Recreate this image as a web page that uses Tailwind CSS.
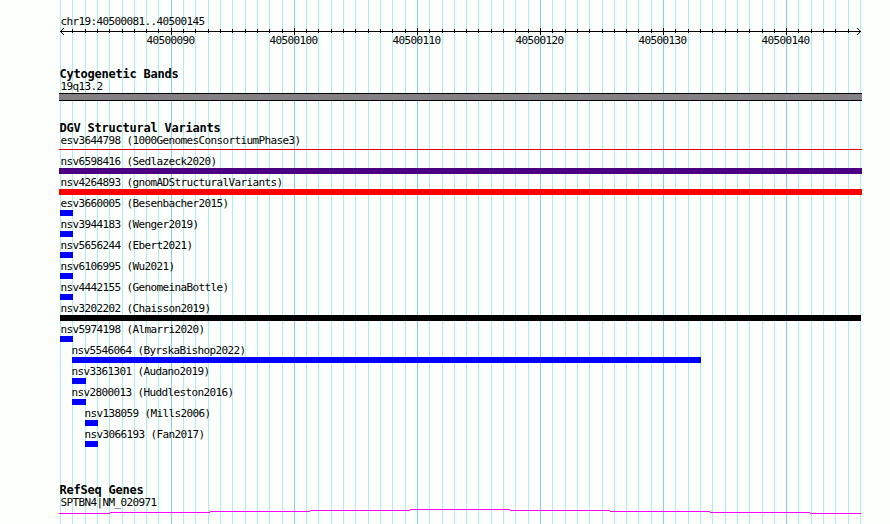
<!DOCTYPE html>
<html lang="en">
<head>
  <meta charset="UTF-8" />
  <meta name="viewport" content="width=device-width, initial-scale=1.0" />
  <title>chr19:40500081..40500145</title>
  <script src="https://cdn.jsdelivr.net/npm/@tailwindcss/browser@4"></script>
</head>
<body class="bg-[#fcfffc] overflow-hidden">
  <div class="relative w-[890px] h-[524px] overflow-hidden text-black text-[11px] leading-[17px] tracking-[-0.622px] whitespace-nowrap font-['DejaVu_Sans_Mono',monospace]">
    <!-- Grid lines behind every track -->
    <svg id="grid" class="absolute inset-0" width="890" height="524" shape-rendering="crispEdges"></svg>

    <div class="relative flex flex-col">
      <!-- Ruler -->
      <div class="h-[13px]"></div>
      <div class="h-[14px] pl-[60.5px]">chr19:40500081..40500145</div>
      <svg id="ruler" class="block" width="890" height="24" shape-rendering="crispEdges"></svg>

      <!-- Cytogenetic bands -->
      <div class="h-[15px]"></div>
      <h2 class="h-3 pl-[59.5px] text-xs leading-[16px] font-bold tracking-[-0.224px]">Cytogenetic Bands</h2>
      <div class="h-[15px] pl-[60.5px]">19q13.2</div>
      <div class="ml-[59px] w-[803px] h-2 border-y border-black bg-[#848084]"></div>

      <!-- Structural variants -->
      <div class="h-5"></div>
      <h2 class="h-[11px] pl-[59.5px] text-xs leading-[14px] font-bold tracking-[-0.224px]">DGV Structural Variants</h2>
      <div id="variants"></div>

      <!-- Genes -->
      <div class="h-9"></div>
      <h2 class="h-[11px] pl-[59.5px] text-xs leading-[14px] font-bold tracking-[-0.224px]">RefSeq Genes</h2>
      <div class="h-[15px] pl-[60.5px]">SPTBN4|NM_020971</div>
      <svg class="block" width="890" height="15" shape-rendering="crispEdges" fill="#ff00ff">
        <rect x="59" y="4" width="51" height="1" />
        <rect x="110" y="3" width="100" height="1" />
        <rect x="210" y="2" width="100" height="1" />
        <rect x="310" y="1" width="100" height="1" />
        <rect x="410" y="0" width="100" height="1" />
        <rect x="510" y="1" width="100" height="1" />
        <rect x="610" y="2" width="100" height="1" />
        <rect x="710" y="3" width="100" height="1" />
        <rect x="810" y="4" width="51" height="1" />
      </svg>
    </div>
  </div>

  <script>
    const start = 40500081;
    const bases = 65;

    function xOf(i) {
      return Math.round(60 + (i * 800) / bases);
    }

    let grid = "";
    let ruler = '<rect x="60" y="4" width="801" height="1" />';
    for (let i = 0; i <= bases; i++) {
      const x = xOf(i);
      const major = (start + i) % 10 === 0;
      grid += `<rect x="${x}" y="0" width="1" height="524" fill="${major ? "#87ceeb" : "#afeeee"}" />`;
      if (i === 0 || i === bases) continue;
      ruler += `<rect x="${x}" y="${major ? 1 : 2}" width="1" height="${major ? 7 : 4}" />`;
      if (major) ruler += `<text x="${x - 24.5}" y="17">${start + i}</text>`;
    }
    // arrow heads, one pixel per step
    for (let d = 1; d <= 3; d++) {
      ruler += `<rect x="${60 + d}" y="${4 - d}" width="1" height="1" /><rect x="${60 + d}" y="${4 + d}" width="1" height="1" />`;
      ruler += `<rect x="${860 - d}" y="${4 - d}" width="1" height="1" /><rect x="${860 - d}" y="${4 + d}" width="1" height="1" />`;
    }
    document.getElementById("grid").innerHTML = grid;
    document.getElementById("ruler").innerHTML = ruler;

    // name, label x, bar x, bar width, colour
    const variants = [
      ["esv3644798 (1000GenomesConsortiumPhase3)", 60.5, 59, 803, "line"],
      ["nsv6598416 (Sedlazeck2020)", 60.5, 59, 803, "bg-[#4b0082]"],
      ["nsv4264893 (gnomADStructuralVariants)", 60.5, 59, 803, "bg-[#ff0000]"],
      ["esv3660005 (Besenbacher2015)", 60.5, 60, 13, "bg-[#0000ff]"],
      ["nsv3944183 (Wenger2019)", 60.5, 60, 13, "bg-[#0000ff]"],
      ["nsv5656244 (Ebert2021)", 60.5, 60, 13, "bg-[#0000ff]"],
      ["nsv6106995 (Wu2021)", 60.5, 60, 13, "bg-[#0000ff]"],
      ["nsv4442155 (GenomeinaBottle)", 60.5, 60, 13, "bg-[#0000ff]"],
      ["nsv3202202 (Chaisson2019)", 60.5, 60, 801, "bg-black"],
      ["nsv5974198 (Almarri2020)", 60.5, 60, 13, "bg-[#0000ff]"],
      ["nsv5546064 (ByrskaBishop2022)", 71.5, 72, 629, "bg-[#0000ff]"],
      ["nsv3361301 (Audano2019)", 71.5, 72, 14, "bg-[#0000ff]"],
      ["nsv2800013 (Huddleston2016)", 71.5, 72, 14, "bg-[#0000ff]"],
      ["nsv138059 (Mills2006)", 84.5, 85, 13, "bg-[#0000ff]"],
      ["nsv3066193 (Fan2017)", 84.5, 85, 13, "bg-[#0000ff]"],
    ];

    document.getElementById("variants").innerHTML = variants.map(([name, lx, bx, w, color]) => {
      const bar = color === "line" ? "h-[6px] border-t-2 border-transparent" : "h-[6px] " + color;
      const inner = color === "line" ? '<div class="h-px bg-[#e00010]"></div>' : "";
      return `<div class="h-[15px]" style="padding-left:${lx}px">${name}</div><div class="${bar}" style="margin-left:${bx}px;width:${w}px">${inner}</div>`;
    }).join("");
  </script>
</body>
</html>
